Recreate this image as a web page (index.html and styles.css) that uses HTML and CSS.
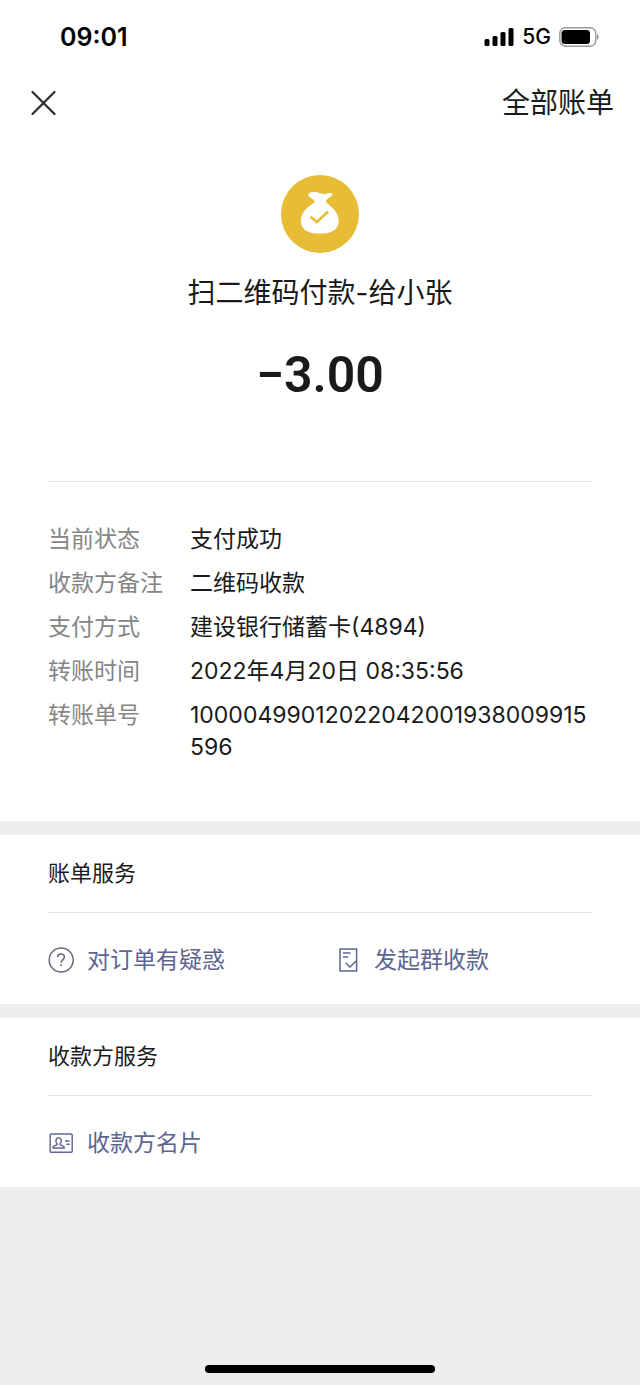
FILE: index.html
```html
<!DOCTYPE html>
<html lang="zh-CN">
<head>
    <meta charset="UTF-8">
    <meta name="viewport" content="width=device-width, initial-scale=1.0">
    <title>账单详情</title>
    <link rel="stylesheet" href="styles.css">
</head>
<body>
    <!-- 状态栏 -->
    <div class="status-bar">
        <span class="time">09:01</span>
        <div class="status-icons">
            <svg width="30" height="20" viewBox="0 0 30 20" aria-hidden="true">
                <rect x="0.5" y="12" width="5" height="7" rx="1.5"/>
                <rect x="8.5" y="9" width="5" height="10" rx="1.5"/>
                <rect x="16.5" y="5" width="5" height="14" rx="1.5"/>
                <rect x="24.5" y="1" width="5" height="18" rx="1.5"/>
            </svg>
            <span class="network">5G</span>
            <svg width="41" height="20" viewBox="0 0 41 20" aria-hidden="true">
                <rect x="0.8" y="0.8" width="36" height="18.4" rx="5.5" fill="none" stroke="#999" stroke-width="1.4"/>
                <rect x="2.5" y="3" width="28.5" height="14" rx="3.5"/>
                <path d="M38 7v6c1.2-.5 1.7-1.6 1.7-3s-.5-2.5-1.7-3z" fill="#999"/>
            </svg>
        </div>
    </div>

    <nav class="nav-bar">
        <button class="close-btn" type="button" aria-label="关闭">
            <svg width="26" height="26" viewBox="0 0 26 26" fill="none" stroke="#2b2b2b" stroke-width="2.2" stroke-linecap="round">
                <path d="M2.5 2l22 22M24.5 2l-22 22"/>
            </svg>
        </button>
        <a class="all-bills" href="#">全部账单</a>
    </nav>

    <main>
        <section class="bill">
            <div class="summary">
                <svg width="78" height="78" viewBox="0 0 78 78" aria-hidden="true">
                    <circle cx="39" cy="39" r="39" fill="#e6bd35"/>
                    <path d="M34 26.500c-1-2.700-6.500-3.600-6.700-6.400-.2-2.400 3.400-3.500 7.200-3 3.800.5 5.600 1.900 8.800 1.900 2.800 0 4.600-1.200 7-.8 1.500.3 1.200 1.600-.2 3-1.700 1.700-4.500 2.600-5.600 5.300z" fill="#fff"/>
                    <path d="M34 25.500h10.500c.5 2.600 3.200 4 6 6.400 4.400 3.700 7.100 8.600 7.100 14 0 8.300-6.300 12.700-18.700 12.700s-19-4.400-19-12.700c0-5.600 3-10.500 7.400-14.200 2.900-2.300 6.200-3.600 6.700-6.200z" fill="#fff"/>
                    <path d="M29.500 41.800l6.400 5.200 11.200-10.500" fill="none" stroke="#e6bd35" stroke-width="2.6"/>
                </svg>
                <h1>扫二维码付款-给小张</h1>
                <p class="amount">−3.00</p>
            </div>
            <dl class="details">
                <dt>当前状态</dt>
                <dd>支付成功</dd>
                <dt>收款方备注</dt>
                <dd>二维码收款</dd>
                <dt>支付方式</dt>
                <dd>建设银行储蓄卡(4894)</dd>
                <dt>转账时间</dt>
                <dd>2022年4月20日 08:35:56</dd>
                <dt>转账单号</dt>
                <dd>10000499012022042001938009915596</dd>
            </dl>
        </section>

        <!-- 账单服务 -->
        <section class="service">
            <h2>账单服务</h2>
            <div class="links">
                <a href="#">
                    <svg width="26" height="26" viewBox="0 0 26 26" fill="none" stroke="#68697a" stroke-width="1.5" aria-hidden="true">
                        <circle cx="13.2" cy="13" r="12"/>
                        <path d="M9.7 10.300c0-2 1.400-3.300 3.400-3.300s3.300 1.200 3.300 3c0 1.300-.7 2-1.700 2.800-1.100.9-1.600 1.400-1.600 2.900"/>
                        <circle cx="13.1" cy="18.3" r="1" fill="#68697a" stroke="none"/>
                    </svg>
                    <span>对订单有疑惑</span>
                </a>
                <a href="#">
                    <svg width="26" height="26" viewBox="0 0 26 26" fill="none" stroke="#5d6590" stroke-width="1.5" aria-hidden="true">
                        <path d="M5 2h16.600v22H5zM8 6h7.500M8 10h5M10.700 16l4.300 4 6.600-6.500"/>
                    </svg>
                    <span>发起群收款</span>
                </a>
            </div>
        </section>

        <!-- 收款方服务 -->
        <section class="service">
            <h2>收款方服务</h2>
            <div class="links">
                <a href="#">
                    <svg width="26" height="26" viewBox="0 0 26 26" fill="none" stroke="#5d6590" stroke-width="1.4" aria-hidden="true">
                        <rect x="2.2" y="4" width="22" height="18.3" rx="1"/>
                        <path d="M5 18v-1c0-1.200 3.700-1.500 4.200-2.600.2-.7-1.300-1.700-1.300-3.500 0-1.900 1-3 2.700-3s2.700 1.100 2.700 3c0 1.800-1.500 2.800-1.300 3.500.5 1.100 4.200 1.400 4.200 2.600v1zM17 11h4.700M18.500 14.200h3.200"/>
                    </svg>
                    <span>收款方名片</span>
                </a>
            </div>
        </section>
    </main>

    <div class="home-indicator"></div>
</body>
</html>
```

FILE: styles.css
```css
* {
    margin: 0;
    padding: 0;
    box-sizing: border-box;
}

body {
    font-family: Inter, "Noto Sans CJK SC", sans-serif;
    font-size: 23px;
    line-height: 32px;
    color: #1a1a1a;
    background: #eee;
    min-height: 100vh;
    display: flex;
    flex-direction: column;
}

a {
    color: inherit;
    text-decoration: none;
}

svg {
    display: block;
    flex-shrink: 0;
}

.status-bar {
    display: flex;
    align-items: center;
    justify-content: space-between;
    height: 73px;
    padding: 0 40px 0 60px;
    background: #fff;
    color: #000;
}

.time {
    font-size: 25px;
    font-weight: 600;
}

.status-icons {
    display: flex;
    align-items: center;
    gap: 8px;
}

.network {
    font-size: 21px;
    font-weight: 500;
}

.nav-bar {
    display: flex;
    align-items: center;
    justify-content: space-between;
    height: 60px;
    padding: 0 26px 0 30px;
    background: #fff;
}

.close-btn {
    border: none;
    background: none;
    cursor: pointer;
}

.all-bills {
    font-size: 28px;
}

.bill {
    background: #fff;
    padding: 42px 48px 58px;
}

.summary {
    display: flex;
    flex-direction: column;
    align-items: center;
    padding-bottom: 76px;
    border-bottom: 1px solid #e5e5e5;
}

h1 {
    margin-top: 20px;
    font-size: 28px;
    font-weight: 400;
    line-height: 40px;
}

.amount {
    margin-top: 32px;
    font-family: Roboto, sans-serif;
    font-size: 50px;
    font-weight: 600;
    line-height: 60px;
}

.details {
    display: grid;
    grid-template-columns: 114px 1fr;
    column-gap: 28px;
    row-gap: 12px;
    padding-top: 41px;
}

dt {
    color: #858585;
    white-space: nowrap;
}

dd {
    overflow-wrap: anywhere;
}

.service {
    margin-top: 14px;
    padding: 0 48px;
    background: #fff;
}

h2 {
    padding: 22px 0 23px;
    font-size: 22px;
    font-weight: 400;
    border-bottom: 1px solid #e5e5e5;
}

.links {
    display: grid;
    grid-template-columns: 1fr 1fr;
    column-gap: 30px;
    padding: 31px 0 28px;
    color: #5d6590;
}

.links a {
    display: flex;
    align-items: center;
    gap: 13px;
}

.home-indicator {
    width: 36%;
    height: 8px;
    margin: auto auto 12px;
    border-radius: 4px;
    background: #000;
}
```
